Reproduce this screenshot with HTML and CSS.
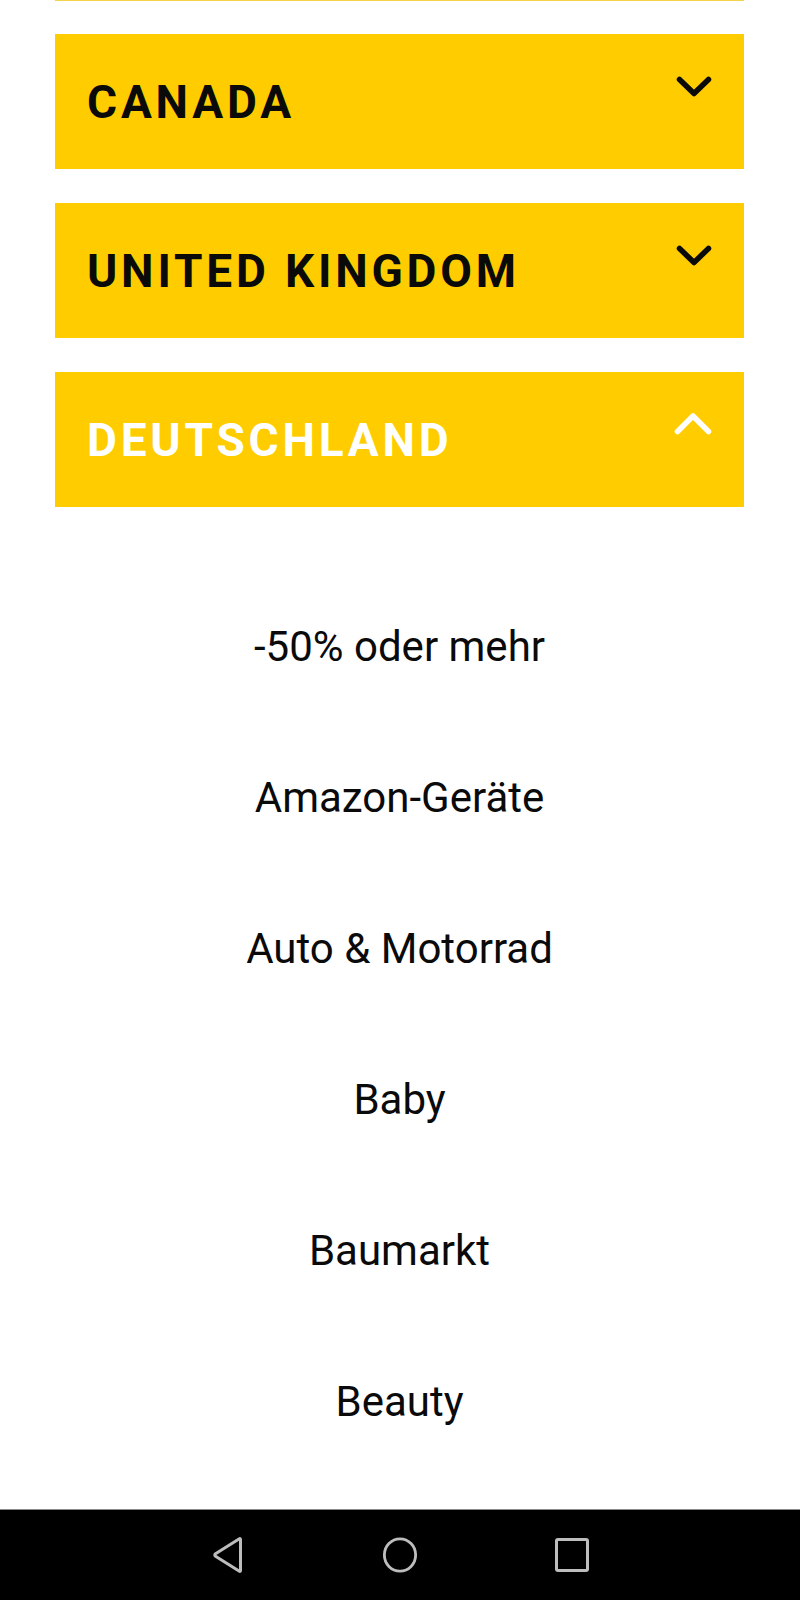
FILE: index.html
```html
<!DOCTYPE html>
<html lang="de">
<head>
<meta charset="utf-8">
<title>Länder</title>
<link rel="stylesheet" href="styles.css">
</head>
<body>
<main class="page">
  <div class="prev-edge"></div>
  <section class="acc">
    <div class="acc-head">
      <span class="acc-title">CANADA</span>
      <svg class="chev" viewBox="0 0 36 21" aria-hidden="true"><polyline points="3.5,3.5 18,17.5 32.5,3.5"/></svg>
    </div>
  </section>
  <section class="acc">
    <div class="acc-head">
      <span class="acc-title">UNITED KINGDOM</span>
      <svg class="chev" viewBox="0 0 36 21" aria-hidden="true"><polyline points="3.5,3.5 18,17.5 32.5,3.5"/></svg>
    </div>
  </section>
  <section class="acc open">
    <div class="acc-head">
      <span class="acc-title">DEUTSCHLAND</span>
      <svg class="chev up" viewBox="0 0 38 24" aria-hidden="true"><polyline points="3.5,20.5 19,5 34.5,20.5"/></svg>
    </div>
    <ul class="cats">
      <li>-50% oder mehr</li>
      <li>Amazon-Geräte</li>
      <li>Auto &amp; Motorrad</li>
      <li>Baby</li>
      <li>Baumarkt</li>
      <li>Beauty</li>
    </ul>
  </section>
</main>
<nav class="sysnav">
  <svg class="nav-ico" viewBox="0 0 34 38" aria-hidden="true"><path d="M29.5 3.5 L29.5 34.5 Q29.5 36 28 35 L4.5 20.3 Q3 19 4.5 17.7 L28 3 Q29.5 2 29.5 3.5 Z"/></svg>
  <svg class="nav-ico" viewBox="0 0 38 38" aria-hidden="true"><ellipse cx="19" cy="19" rx="16.5" ry="17"/></svg>
  <svg class="nav-ico" viewBox="0 0 36 36" aria-hidden="true"><rect x="2.5" y="2.5" width="31" height="31" rx="1.5"/></svg>
</nav>
</body>
</html>
```
FILE: styles.css
```css
html, body {
  margin: 0;
  padding: 0;
  background: #ffffff;
}

body {
  width: 800px;
  height: 1600px;
  overflow: hidden;
  font-family: Roboto, "Liberation Sans", sans-serif;
  color: #0a0a0a;
}

.page {
  padding: 0 56px 0 55px;
  display: flex;
  flex-direction: column;
  gap: 34px;
}

.prev-edge {
  height: 1px;
  background: #f2d34a;
  margin-bottom: -1px;
}

.acc-head {
  height: 135px;
  background: #ffcc00;
  display: flex;
  justify-content: space-between;
  align-items: center;
  padding: 0 32px 0 32px;
  box-sizing: border-box;
}

.acc-title {
  font-weight: 700;
  font-size: 46px;
  line-height: 1;
  letter-spacing: 3.8px;
  color: #0a0a0a;
}

.open .acc-title {
  color: #ffffff;
}

.chev {
  align-self: flex-start;
  margin-top: 42px;
  width: 36px;
  height: 21px;
  fill: none;
  stroke: #0a0a0a;
  stroke-width: 5.5;
  stroke-linecap: round;
  stroke-linejoin: round;
}

.chev.up {
  margin-top: 39px;
  width: 38px;
  height: 24px;
  stroke: #ffffff;
}

.cats {
  list-style: none;
  margin: 64px 0 0;
  padding: 0;
}

.cats li {
  height: 151px;
  display: flex;
  align-items: center;
  justify-content: center;
  font-size: 42px;
  font-weight: 400;
  color: #0a0a0a;
}

.sysnav {
  position: fixed;
  left: 0;
  right: 0;
  bottom: 0;
  height: 91px;
  background: #000000;
  border-top: 1px solid #8a8a8a;
  box-sizing: border-box;
  display: flex;
  justify-content: center;
  align-items: center;
  gap: 136px;
}

.nav-ico {
  width: 36px;
  height: 38px;
  fill: none;
  stroke: #bdbdbd;
  stroke-width: 3;
  stroke-linejoin: round;
}
```
